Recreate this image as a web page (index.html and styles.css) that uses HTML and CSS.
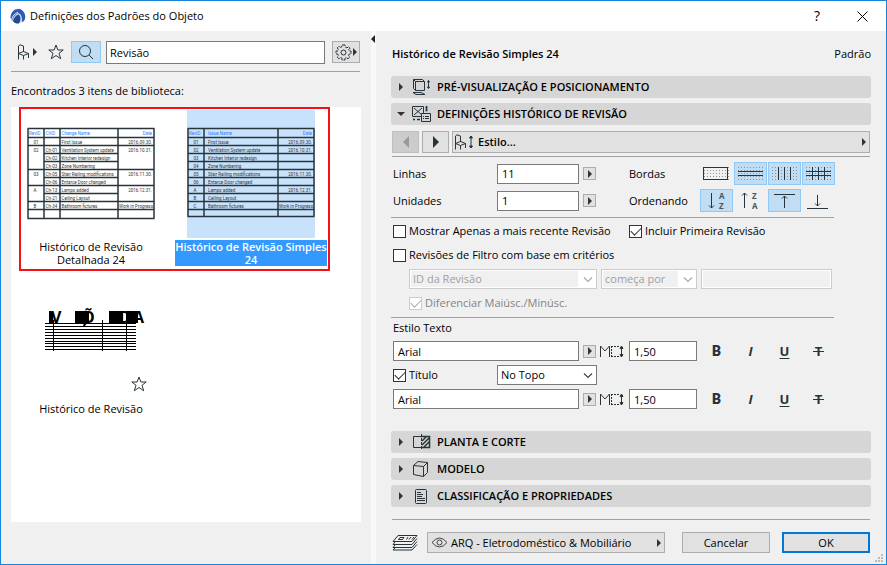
FILE: index.html
```html
<!DOCTYPE html>
<html lang="pt">
<head>
<meta charset="utf-8">
<title>Definições dos Padrões do Objeto</title>
<link rel="stylesheet" href="styles.css">
</head>
<body>
<svg width="0" height="0" class="defs" aria-hidden="true">
  <defs>
    <pattern id="dots" width="3" height="3" patternUnits="userSpaceOnUse"><rect x="1" y="1" width="1" height="1" fill="#8c9399"/></pattern>
    <symbol id="right" viewBox="0 0 4 8"><path d="M0 0L4 4L0 8Z" fill="#333"/></symbol>
    <symbol id="chevron" viewBox="0 0 10 6"><path d="M1 .5L5 4.500L9 .5" fill="none" stroke="currentColor" stroke-width="1.200"/></symbol>
    <symbol id="star" viewBox="0 0 16 16"><path d="M8 1L9.900 6H15.200L11 9.300L12.700 14.800L8 11.500L3.300 14.800L5 9.300L.8 6H6.100Z" fill="none" stroke="#27343b"/></symbol>
    <symbol id="chair" viewBox="0 0 13 16"><path d="M1.500 15.500V2L3 .8L6.500 2V8M1.500 9.500L6.500 11.500L11.500 9.500L6.500 7.500L1.500 9.500M6.500 11.500V15.500M11.500 9.500V14" fill="none" stroke="#27343b"/></symbol>
    <symbol id="textsize" viewBox="0 0 25 13"><path d="M.5 12V1L5 6L9.500 1V12" fill="none" stroke="#27343b"/><path d="M11 1.500H20M11 11.500H20M11.500 1V12" fill="none" stroke="#27343b" stroke-dasharray="2 1"/><path d="M21.500 1V12M20 3.500L21.500 1L23 3.500ZM20 9.500L21.500 12L23 9.500Z" fill="#27343b" stroke="#27343b"/></symbol>
  </defs>
</svg>
<div class="window">
  <header class="titlebar">
    <svg width="16" height="16" viewBox="0 0 16 16"><circle cx="8" cy="8" r="7.500" fill="#c9d8ef"/><path d="M.5 10C1 3 6 0 11 1.500C15 4 16.500 9 14 13L12 14C12.500 9 11 6 8.500 5C5 6 3.500 9 2 13Z" fill="#2c5bb5"/><path d="M3 13C4 9.500 6 7 8.500 6.500C11 8.500 11 12 9 15.300C6 16 4 15 3 13Z" fill="#244890"/><path d="M1.500 12C2.500 8 5 5 8 4.500" fill="none" stroke="#e8effa"/></svg>
    <h1>Definições dos Padrões do Objeto</h1>
    <button type="button" class="help" aria-label="Ajuda">?</button>
    <button type="button" class="close" aria-label="Fechar"><svg width="11" height="11" viewBox="0 0 11 11"><path d="M.5 .5L10.500 10.500M10.500 .5L.5 10.500" stroke="#000" fill="none"/></svg></button>
  </header>
  <div class="content">
    <aside class="browser">
      <div class="toolbar">
        <button type="button" class="plain chair" aria-label="Objeto"><svg width="13" height="16"><use href="#chair"/></svg><svg width="4" height="8"><use href="#right"/></svg></button>
        <button type="button" class="plain" aria-label="Favoritos"><svg width="16" height="16"><use href="#star"/></svg></button>
        <button type="button" class="search" aria-label="Pesquisar"><svg width="16" height="16" viewBox="0 0 16 16"><circle cx="7" cy="7" r="5.500" fill="none" stroke="#27343b"/><path d="M11 11L15 15" stroke="#27343b"/></svg></button>
        <input type="text" class="query" value="Revisão" aria-label="Pesquisa">
        <button type="button" class="gear" aria-label="Opções"><svg width="17" height="17" viewBox="0 0 17 17" fill="none" stroke="#27343b"><path d="M7 1H10L10.400 3.200L12 3.900L13.700 2.600L15 4.200L13.700 5.800L14.200 7H16V10H14.200L13.600 11.400L14.800 13.100L13 14.800L11.400 13.600L10 14.200V16H7V14.200L5.600 13.600L3.900 14.800L2.200 13L3.400 11.400L2.800 10H1V7H2.800L3.400 5.600L2.200 3.900L3.900 2.200L5.600 3.400L6.700 2.900Z" stroke-dasharray="4 1"/><circle cx="8.500" cy="8.500" r="2.500"/></svg><svg width="4" height="8"><use href="#right"/></svg></button>
      </div>
      <hr>
      <p class="found">Encontrados 3 itens de biblioteca:</p>
      <div class="library">
        <div class="marker"></div>
        <figure>
          <svg class="thumb" viewBox="0 0 256 256">
            <path d="M1 37H255M1 55H255M1 71H255M34 87H183M34 103H183M1 119H255M34 135H183M1 151H255M34 167H183M1 183H255M1 199H255M1 217H255M2 37V217M34 37V217M66 37V217M182 37V217M254 37V217" class="rules"/>
            <g class="head"><text x="4" y="50">RevID</text><text x="37" y="50">ChID</text><text x="69" y="50">Change Name</text><text x="250" y="50" class="end">Date</text></g>
            <g><text x="13" y="67">01</text><text x="13" y="83">02</text><text x="13" y="131">03</text><text x="13" y="163">A</text><text x="13" y="195">B</text></g>
            <g><text x="37" y="83">Ch-01</text><text x="37" y="99">Ch-02</text><text x="37" y="115">Ch-03</text><text x="37" y="131">Ch-05</text><text x="37" y="147">Ch-06</text><text x="37" y="163">Ch-13</text><text x="37" y="179">Ch-21</text><text x="37" y="195">Ch-34</text></g>
            <g><text x="69" y="67">First Issue</text><text x="69" y="83">Ventilation System update</text><text x="69" y="99">Kitchen Interior redesign</text><text x="69" y="115">Zone Numbering</text><text x="69" y="131">Stair Railing modifications</text><text x="69" y="147">Entarce Door changed</text><text x="69" y="163">Lamps added</text><text x="69" y="179">Ceiling Layout</text><text x="69" y="195">Bathroom fictures</text></g>
            <g class="end"><text x="250" y="67">2016.09.30.</text><text x="250" y="83">2016.10.31.</text><text x="250" y="131">2016.11.30.</text><text x="250" y="163">2016.12.31.</text><text x="252" y="195">Work in Progress</text></g>
          </svg>
          <figcaption>Histórico de Revisão Detalhada 24</figcaption>
        </figure>
        <figure class="selected">
          <svg class="thumb" viewBox="0 0 256 256">
            <path d="M1 37H255M1 55H255M1 71H255M1 87H255M1 103H255M1 119H255M1 135H255M1 151H255M1 167H255M1 183H255M1 199H255M1 213H255M2 37V213M34 37V213M182 37V213M254 37V213" class="rules"/>
            <g class="head"><text x="4" y="50">RevID</text><text x="42" y="50">Issue Name</text><text x="250" y="50" class="end">Date</text></g>
            <g><text x="13" y="67">01</text><text x="13" y="83">02</text><text x="13" y="99">03</text><text x="13" y="115">04</text><text x="13" y="131">05</text><text x="13" y="147">06</text><text x="13" y="163">A</text><text x="13" y="179">B</text><text x="13" y="195">C</text></g>
            <g><text x="42" y="67">First Issue</text><text x="42" y="83">Ventilation System update</text><text x="42" y="99">Kitchen Interior redesign</text><text x="42" y="115">Zone Numbering</text><text x="42" y="131">Stair Railing modifications</text><text x="42" y="147">Entarce Door changed</text><text x="42" y="163">Lamps added</text><text x="42" y="179">Ceiling Layout</text><text x="42" y="195">Bathroom fictures</text></g>
            <g class="end"><text x="250" y="67">2016.09.30.</text><text x="250" y="83">2016.10.31.</text><text x="250" y="131">2016.11.30.</text><text x="250" y="163">2016.12.31.</text><text x="252" y="195">Work in Progress</text></g>
          </svg>
          <figcaption>Histórico de Revisão Simples 24</figcaption>
        </figure>
        <figure>
          <svg class="thumb" viewBox="0 0 128 128">
            <path d="M18 51.500H109M18 54.500H109M18 57.500H109M18 60.500H109M18 63.500H109M18 66.500H109M18 69.500H109M18 71.500H109M18 74.500H109M18 77.500H109M26.500 48V79M75.500 48V79M99.500 48V79" stroke="#000" fill="none"/>
            <g class="stack"><text x="24" y="51">V</text><text x="55" y="51">Õ</text><text x="92" y="51">D</text><text x="106" y="51">A</text></g>
            <path d="M22 39H26V51H22ZM48 39H62V51H48ZM82 39H96V51H82ZM99 39H111V51H99ZM57 51H60L58 54H56Z" fill="#000"/>
          </svg>
          <svg class="favourite" width="16" height="16"><use href="#star"/></svg>
          <figcaption>Histórico de Revisão</figcaption>
        </figure>
      </div>
    </aside>
    <div class="splitter"><svg width="4" height="8" viewBox="0 0 4 8"><path d="M4 0L0 4L4 8Z" fill="#222"/></svg></div>
    <main class="settings">
      <div class="heading"><h2>Histórico de Revisão Simples 24</h2><span>Padrão</span></div>
      <button type="button" class="section"><svg class="tri" width="4" height="8"><use href="#right"/></svg><svg width="20" height="18" viewBox="0 0 20 18" fill="none" stroke="#27343b"><path d="M3.500 3.500H12.500V12.500H3.500ZM3.500 12.500L1.500 10.500V1.500L3.500 3.500M1.500 1.500H10.500L12.500 3.500M1 14.500H9L13 16.500H4Z"/><path d="M16.500 3V10M15.500 4L16.500 2.500L17.500 4ZM15.500 9L16.500 10.500L17.500 9Z" fill="#27343b"/></svg>PRÉ-VISUALIZAÇÃO E POSICIONAMENTO</button>
      <button type="button" class="section"><svg class="tri down" width="8" height="4" viewBox="0 0 8 4"><path d="M0 0H8L4 4Z" fill="#333"/></svg><svg width="20" height="18" viewBox="0 0 20 18" fill="none" stroke="#27343b"><path d="M.5 1.500H11.500V11.500H.5ZM2 3L10 10M10 3L2 10"/><path d="M9.500 8.500H18.500V16.500H9.500Z" fill="#d6d6d6"/><path d="M13 11.500H17M13 13.500H17M11 11.500H12M11 13.500H12"/><path d="M14.500 1V6M13.500 2.500H15.500M13.500 5.500H15.500M1 14.500H3M5 14.500H8" stroke-width="1.500"/></svg>DEFINIÇÕES HISTÓRICO DE REVISÃO</button>
      <div class="pages">
        <button type="button" disabled aria-label="Anterior"><svg width="6" height="12" viewBox="0 0 6 12"><path d="M6 0L0 6L6 12Z" fill="#999"/></svg></button>
        <button type="button" aria-label="Seguinte"><svg width="6" height="12" viewBox="0 0 6 12"><path d="M0 0L6 6L0 12Z" fill="#27343b"/></svg></button>
        <button type="button" class="page"><svg width="13" height="16"><use href="#chair"/></svg><svg width="6" height="14" viewBox="0 0 6 14"><path d="M3 1V13M1.500 3L3 1L4.500 3ZM1.500 11L3 13L4.500 11Z" fill="#27343b" stroke="#27343b"/></svg><b>Estilo...</b><svg class="more" width="4" height="8"><use href="#right"/></svg></button>
      </div>
      <hr class="inset">
      <form class="form">
        <div class="block sizes">
          <div class="pair">
            <div class="group"><label class="name" for="linhas">Linhas</label><input type="text" id="linhas" class="number" value="11"><button type="button" class="step" aria-label="Linhas"><svg width="4" height="8"><use href="#right"/></svg></button></div>
            <div class="group"><span class="side">Bordas</span>
              <div class="toggles">
                <button type="button" aria-label="Moldura"><svg width="27" height="15" viewBox="0 0 27 15"><rect x="1" y="1" width="25" height="13" fill="url(#dots)"/><rect x=".5" y="1.500" width="24" height="12" fill="none" stroke="#27343b"/></svg></button>
                <button type="button" class="on" aria-label="Linhas horizontais"><svg width="27" height="15" viewBox="0 0 27 15"><rect width="27" height="15" fill="url(#dots)"/><path d="M1 5.500H26M1 9.500H26" stroke="#27343b"/></svg></button>
                <button type="button" class="on" aria-label="Linhas verticais"><svg width="27" height="15" viewBox="0 0 27 15"><rect width="27" height="15" fill="url(#dots)"/><path d="M7.500 1V14M13.500 1V14M19.500 1V14" stroke="#27343b"/></svg></button>
                <button type="button" class="on" aria-label="Grelha"><svg width="27" height="15" viewBox="0 0 27 15"><rect width="27" height="15" fill="url(#dots)"/><path d="M1 5.500H26M1 9.500H26M7.500 1V14M13.500 1V14M19.500 1V14" stroke="#27343b"/></svg></button>
              </div>
            </div>
          </div>
          <div class="pair">
            <div class="group"><label class="name" for="unidades">Unidades</label><input type="text" id="unidades" class="number" value="1"><button type="button" class="step" aria-label="Unidades"><svg width="4" height="8"><use href="#right"/></svg></button></div>
            <div class="group"><span class="side">Ordenando</span>
              <div class="toggles">
                <button type="button" class="on" aria-label="A a Z"><svg width="27" height="19" viewBox="0 0 27 19"><path d="M8.500 2V17M6 14.500L8.500 17L11 14.500" fill="none" stroke="#27343b"/><text x="16" y="8" class="letter">A</text><text x="16" y="18" class="letter">Z</text></svg></button>
                <button type="button" aria-label="Z a A"><svg width="27" height="19" viewBox="0 0 27 19"><path d="M7.500 2V17M5 4.500L7.500 2L10 4.500" fill="none" stroke="#27343b"/><text x="15" y="8" class="letter">Z</text><text x="15" y="18" class="letter">A</text></svg></button>
                <button type="button" class="on" aria-label="De baixo para cima"><svg width="27" height="19" viewBox="0 0 27 19"><path d="M3 3.500H24M13.500 5V17M11 7.500L13.500 5L16 7.500" fill="none" stroke="#27343b"/></svg></button>
                <button type="button" aria-label="De cima para baixo"><svg width="27" height="19" viewBox="0 0 27 19"><path d="M2 17.500H23M12.500 4V15M10 12.500L12.500 15L15 12.500" fill="none" stroke="#27343b"/></svg></button>
              </div>
            </div>
          </div>
        </div>
        <hr>
        <div class="block">
          <div class="pair row">
            <label class="check"><input type="checkbox">Mostrar Apenas a mais recente Revisão</label>
            <label class="check"><input type="checkbox" checked>Incluir Primeira Revisão</label>
          </div>
          <div class="row"><label class="check"><input type="checkbox">Revisões de Filtro com base em critérios</label></div>
          <div class="row filter">
            <span class="drop field"><select disabled aria-label="Campo"><option>ID da Revisão</option></select><svg width="10" height="6"><use href="#chevron"/></svg></span>
            <span class="drop rule"><select disabled aria-label="Critério"><option>começa por</option></select><svg width="10" height="6"><use href="#chevron"/></svg></span>
            <input type="text" disabled class="value" aria-label="Valor">
          </div>
          <div class="row filter"><label class="check off"><input type="checkbox" checked disabled>Diferenciar Maiúsc./Minúsc.</label></div>
        </div>
        <hr>
        <div class="block">
          <label class="caption" for="font1">Estilo Texto</label>
          <div class="pair row">
            <div class="group"><input type="text" id="font1" class="font" value="Arial"><button type="button" class="step" aria-label="Tipo de letra"><svg width="4" height="8"><use href="#right"/></svg></button><svg width="25" height="13"><use href="#textsize"/></svg></div>
            <div class="group"><input type="text" class="height" value="1,50" aria-label="Altura do texto">
              <div class="toggles type"><button type="button"><b>B</b></button><button type="button"><i>I</i></button><button type="button"><u>U</u></button><button type="button"><s>T</s></button></div></div>
          </div>
          <div class="row group"><label class="check name"><input type="checkbox" checked>Título</label><span class="drop place"><select aria-label="Posição do título"><option>No Topo</option></select><svg width="10" height="6"><use href="#chevron"/></svg></span></div>
          <div class="pair row">
            <div class="group"><input type="text" class="font" value="Arial" aria-label="Tipo de letra do título"><button type="button" class="step" aria-label="Tipo de letra"><svg width="4" height="8"><use href="#right"/></svg></button><svg width="25" height="13"><use href="#textsize"/></svg></div>
            <div class="group"><input type="text" class="height" value="1,50" aria-label="Altura do título">
              <div class="toggles type"><button type="button"><b>B</b></button><button type="button"><i>I</i></button><button type="button"><u>U</u></button><button type="button"><s>T</s></button></div></div>
          </div>
        </div>
      </form>
      <button type="button" class="section"><svg class="tri" width="4" height="8"><use href="#right"/></svg><svg width="20" height="18" viewBox="0 0 20 18" fill="none" stroke="#27343b"><path d="M10 3.500H1.500V14.500H10"/><path d="M9.500 1V17" stroke-dasharray="3 1"/><path d="M9 3.500H17.500V14.500H9M10 8L14 4M10 12L17 5M12 14L17 9" stroke-width="1.500"/></svg>PLANTA E CORTE</button>
      <button type="button" class="section"><svg class="tri" width="4" height="8"><use href="#right"/></svg><svg width="20" height="18" viewBox="0 0 20 18" fill="none" stroke="#27343b"><path d="M1.500 5.500L11.500 6.500V16.500L1.500 14.500ZM1.500 5.500L6 1.500L15.500 2.500L11.500 6.500M15.500 2.500V12.500L11.500 16.500"/></svg>MODELO</button>
      <button type="button" class="section"><svg class="tri" width="4" height="8"><use href="#right"/></svg><svg width="20" height="18" viewBox="0 0 20 18" fill="none" stroke="#27343b"><rect x="3.500" y="2.500" width="11" height="14" rx="1"/><path d="M5 5.500H9M5 7.500H11M5 9.500H10M5 11.500H13M5 13.500H13"/></svg>CLASSIFICAÇÃO E PROPRIEDADES</button>
      <hr class="inset end-line">
      <footer>
        <svg width="26" height="17" viewBox="0 0 26 17" fill="none" stroke="#27343b"><path d="M6 1.500H25L20 7.500H1ZM3 8L1 10.500H20L25 4.500M3 11L1 13.500H20L25 7.500M3 14L1 16H20L25 10.500M8 3.500H12L10.500 5.500H6.500ZM16 3L14.500 5.500M19 3L17 5.500M22 3L20 5.500"/></svg>
        <button type="button" class="push layer"><svg width="17" height="11" viewBox="0 0 17 11" fill="none" stroke="#444"><path d="M1 5.500Q8.500 -3.500 16 5.500Q8.500 14.500 1 5.500Z"/><circle cx="8.500" cy="5.500" r="2.500"/></svg><span>ARQ - Eletrodoméstico &amp; Mobiliário</span><svg class="more" width="4" height="8"><use href="#right"/></svg></button>
        <button type="button" class="push">Cancelar</button>
        <button type="button" class="push ok">OK</button>
      </footer>
    </main>
  </div>
  <svg class="grip" width="8" height="8" viewBox="0 0 8 8" fill="#bcbcbc"><path d="M6 0H8V2H6ZM3 3H5V5H3ZM6 3H8V5H6ZM0 6H2V8H0ZM3 6H5V8H3ZM6 6H8V8H6Z"/></svg>
</div>
</body>
</html>
```
FILE: styles.css
```css
* { box-sizing: border-box; }
body { margin: 0; font: 11px/14px "Open Sans", "Noto Sans", sans-serif; color: #000; }
button, input, select { font: inherit; color: inherit; margin: 0; padding: 0; border-radius: 0; }
button { display: flex; align-items: center; justify-content: center; background: none; border: 0; }
svg { flex: none; display: block; }
h1, h2, p, figure { margin: 0; }
h1 { font-size: 11px; font-weight: 400; }
h2 { font-size: 11px; font-weight: 600; }
b { font-weight: 600; }
hr { border: 0; height: 1px; margin: 0; background: #a0a0a0; }
.inset { margin: 0 1px; }
.defs { position: absolute; }

.window { position: relative; display: flex; flex-direction: column; min-height: 100vh; border: 1px solid #1883d7; background: #f0f0f0; }
.titlebar { display: flex; align-items: center; height: 30px; padding: 0 18px 0 9px; background: #fff; }
.titlebar h1 { flex: 1; margin-left: 4px; }
.help { width: 12px; margin-right: 34px; font-size: 14px; }
.content { flex: 1; display: grid; grid-template-columns: 370px 5px 1fr; }

.browser { display: flex; flex-direction: column; padding: 10px 10px 42px; }
.toolbar { display: flex; align-items: center; width: 349px; height: 22px; margin-bottom: 8px; }
.plain { width: 16px; height: 22px; }
.chair { width: 32px; gap: 3px; margin-right: 5px; }
.search { width: 30px; height: 22px; margin: 0 5px 0 7px; background: #c1ddf3; border: 1px solid #90c8f6; }
.query { flex: 1; min-width: 0; height: 23px; margin-right: 7px; padding: 0 3px; background: #fff; border: 1px solid #7a7a7a; }
.gear { width: 28px; height: 22px; gap: 1px; background: #e1e1e1; border: 1px solid #adadad; }
.browser hr { width: 349px; }
.found { padding: 12px 0 9px; }
.library { position: relative; flex: 1; display: grid; grid-template-columns: 152px 152px; grid-auto-rows: 162px; align-content: start; column-gap: 8px; padding: 3px 4px; background: #fff; }
.marker { position: absolute; left: 8px; top: 0; width: 311px; height: 164px; border: 2px solid #f51016; }
figure { position: relative; text-align: center; }
.thumb { width: 128px; height: 128px; margin: 0 auto 2px; font: 9px Roboto, sans-serif; fill: #333; }
figcaption { line-height: 13px; padding: 0 16px; }
.selected .thumb { background: #c9e2fc; }
.selected figcaption { padding: 0; background: #3399ff; color: #fff; font-weight: 600; }
.rules { stroke: #27343b; stroke-width: 3; fill: none; }
.head { fill: #2a7fff; }
.end { text-anchor: end; }
.stack { font: 700 16px "Open Sans", sans-serif; fill: #000; }
.favourite { position: absolute; left: 116px; top: 104px; }

.splitter { background: #f8f8f8; padding-top: 4px; }
.settings { padding: 13px 15px 11px 15px; }
.heading { display: flex; justify-content: space-between; height: 20px; align-items: center; margin-bottom: 12px; padding-left: 1px; }
.section { width: 100%; height: 22px; margin-bottom: 5px; padding-left: 8px; justify-content: flex-start; gap: 5px; border-radius: 3px; background: #d6d6d6; font-weight: 600; }
.tri { margin-right: 4px; }
.down { margin: 0 2px 0 -2px; }
.pages { display: flex; gap: 3px; margin: 6px 1px 3px; }
.pages button { width: 27px; height: 22px; border: 1px solid #adadad; background: #e1e1e1; }
.pages button:disabled { background: #ccc; border-color: #bfbfbf; }
.pages .page { flex: 1; justify-content: flex-start; gap: 1px; padding: 0 3px 0 1px; }
.page b { margin-left: 3px; }
.more { margin-left: auto; }

.form { margin-bottom: 18px; }
.form hr { max-width: 443px; }
.block { padding: 1px 0 2px 2px; }
.sizes { display: grid; gap: 4px; padding: 5px 0 5px 2px; }
.pair { display: grid; grid-template-columns: 236px 1fr; align-items: center; }
.row { min-height: 24px; display: grid; align-items: center; }
.group { display: flex; align-items: center; gap: 4px; }
.name { width: 100px; }
.side { width: 67px; }
.form input[type="text"] { height: 20px; padding: 0 4px; background: #fff; border: 1px solid #7a7a7a; }
.form .number { width: 82px; }
.form .font { width: 186px; }
.form .height { width: 68px; margin-right: -1px; }
.step { width: 13px; height: 13px; background: #e1e1e1; border: 1px solid #adadad; }
.toggles { display: flex; gap: 1px; }
.toggles button { width: 33px; height: 23px; }
.toggles .on { background: #c1ddf3; border: 1px solid #90c8f6; }
.letter { font: 700 8px "Open Sans", sans-serif; fill: #4a545a; }
.type { color: #27343b; font-weight: 700; font-size: 13px; }
.type b { font: 900 14px Roboto, sans-serif; }
.type u { text-underline-offset: 2px; }
.type s { position: relative; text-decoration: none; }
.type s::after { content: ""; position: absolute; left: -2px; right: -2px; top: 50%; height: 1px; background: #27343b; }
.check { display: flex; align-items: center; gap: 3px; }
.check input { appearance: none; width: 13px; height: 13px; border: 1px solid #333; background: #fff; display: grid; place-items: center; }
.check input:checked::before { content: ""; width: 9px; height: 5px; border: solid #333; border-width: 0 0 1px 1px; transform: translateY(-1px) rotate(-45deg); }
.off { color: #838383; }
.check.off input { border-color: #ccc; }
.check.off input:checked::before { border-color: #aaa; }
.filter { display: flex; gap: 4px; padding-left: 16px; }
.drop { position: relative; height: 20px; }
.drop select { appearance: none; width: 100%; height: 20px; padding: 0 3px; border: 1px solid #7a7a7a; background: #fff; }
.drop select:disabled { color: #a0a0a0; opacity: 1; border: 1px solid #ccc; background: linear-gradient(#f0f0f0, #f0f0f0) 1px 1px / calc(100% - 19px) 16px no-repeat #fff; }
.drop svg { position: absolute; right: 4px; top: 8px; color: #444; }
.drop select:disabled + svg { color: #aaa; }
.field { width: 188px; }
.rule { width: 96px; }
.place { width: 100px; }
.form input.value { width: 131px; border-color: #ccc; background: #f0f0f0; box-shadow: inset 0 0 0 1px #fff; }
.caption { display: block; height: 20px; line-height: 18px; }

.end-line { margin: 12px 1px; }
footer { display: flex; align-items: center; gap: 12px; padding: 0 1px; }
.push { width: 88px; height: 21px; background: #e1e1e1; border: 1px solid #adadad; }
.layer { flex: 1; margin: 0 5px 0 -3px; padding: 0 3px; gap: 3px; }
.ok { border: 2px solid #0078d7; }
.grip { position: absolute; right: 3px; bottom: 2px; }
```
